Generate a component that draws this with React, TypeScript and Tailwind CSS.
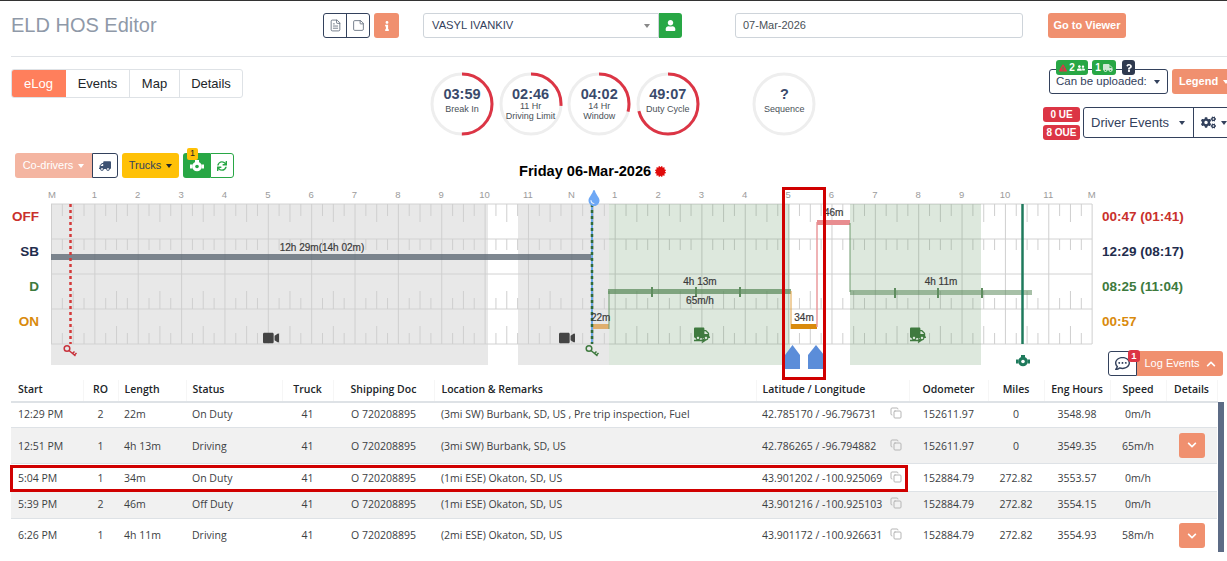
import { Copy, FileText, StickyNote } from 'lucide-react';
import {
    FaCertificate,
    FaChevronDown,
    FaChevronUp,
    FaCogs,
    FaExclamationTriangle,
    FaInfo,
    FaQuestion,
    FaRegCommentDots,
    FaSync,
    FaTint,
    FaTruck,
    FaUser,
    FaUserFriends,
    FaVideo
} from 'react-icons/fa';

const HOUR = 43.36;
const hourLabels = ['M', '1', '2', '3', '4', '5', '6', '7', '8', '9', '10', '11', 'N', '1', '2', '3', '4', '5', '6', '7', '8', '9', '10', '11', 'M'];

const rows = [
    { start: '12:29 PM', ro: 2, length: '22m', status: 'On Duty', loc: '(3mi SW) Burbank, SD, US , Pre trip inspection, Fuel', lat: '42.785170 / -96.796731', odo: '152611.97', miles: '0', eng: '3548.98', speed: '0m/h', open: false, h: 'h-[25px]', alt: false, shift: '' },
    { start: '12:51 PM', ro: 1, length: '4h 13m', status: 'Driving', loc: '(3mi SW) Burbank, SD, US', lat: '42.786265 / -96.794882', odo: '152611.97', miles: '0', eng: '3549.35', speed: '65m/h', open: true, h: 'h-[36px]', alt: true, shift: '[&>td]:pt-[3px]' },
    { start: '5:04 PM', ro: 1, length: '34m', status: 'On Duty', loc: '(1mi ESE) Okaton, SD, US', lat: '43.901202 / -100.925069', odo: '152884.79', miles: '272.82', eng: '3553.57', speed: '0m/h', open: false, h: 'h-[28px]', alt: false, shift: '[&>td]:pt-[3px]' },
    { start: '5:39 PM', ro: 2, length: '46m', status: 'Off Duty', loc: '(1mi ESE) Okaton, SD, US', lat: '43.901216 / -100.925103', odo: '152884.79', miles: '272.82', eng: '3554.15', speed: '0m/h', open: false, h: 'h-[27px]', alt: true, shift: '' },
    { start: '6:26 PM', ro: 1, length: '4h 11m', status: 'Driving', loc: '(2mi ESE) Okaton, SD, US', lat: '43.901172 / -100.926631', odo: '152884.79', miles: '272.82', eng: '3554.93', speed: '58m/h', open: true, h: 'h-[35px]', alt: false, shift: '' }
];

const dials = [
    { time: '03:59', lines: ['Break In'], pct: 50 },
    { time: '02:46', lines: ['11 Hr', 'Driving Limit'], pct: 26 },
    { time: '04:02', lines: ['14 Hr', 'Window'], pct: 29 },
    { time: '49:07', lines: ['Duty Cycle'], pct: 71 }
];

function Dial({ time, lines, pct }: { time: string; lines: string[]; pct: number }) {
    const r = 30;
    const c = 2 * Math.PI * r;
    return (
        <div className="relative h-[64px] w-[64px] shrink-0">
            <svg width="64" height="64" className="absolute inset-0">
                <circle cx="32" cy="32" r={r} fill="none" stroke="#eeeeee" strokeWidth="3" />
                {pct > 0 && (
                    <circle
                        cx="32"
                        cy="32"
                        r={r}
                        fill="none"
                        stroke="#dc3545"
                        strokeWidth="3"
                        strokeDasharray={`${(c * pct) / 100} ${c}`}
                        transform="rotate(-90 32 32)"
                    />
                )}
            </svg>
            <div className="absolute inset-0 flex flex-col items-center pt-[15px] text-center">
                <div className="text-[14.5px] leading-[15px] font-bold text-[#3a4a6b]">{time}</div>
                {lines.map((line) => (
                    <div key={line} className={`whitespace-nowrap text-[9px] text-[#495057] ${lines.length > 1 ? 'leading-[9.5px]' : 'mt-[2px] leading-[11px]'}`}>
                        {line}
                    </div>
                ))}
            </div>
        </div>
    );
}

function Caret({ color = 'border-t-white' }: { color?: string }) {
    return <span className={`inline-block h-0 w-0 shrink-0 border-x-[3.5px] border-t-[4px] border-x-transparent ${color}`} />;
}

// Motor: cuerpo redondo con tapa arriba y salidas a los lados
function Engine({ color, hole }: { color: string; hole: string }) {
    return (
        <svg width="14" height="12" viewBox="0 0 14 12" className="block">
            <rect x="5" y="0" width="4" height="2" fill={color} />
            <circle cx="7" cy="6.5" r="4.8" fill={color} />
            <rect x="0" y="4.5" width="2.5" height="4" fill={color} />
            <rect x="11.5" y="4.5" width="2.5" height="4" fill={color} />
            <circle cx="7" cy="6.5" r="1.8" fill={hole} />
        </svg>
    );
}

function Key({ x, color }: { x: number; color: string }) {
    return (
        <g transform={`translate(${x} 161)`} fill="none" stroke={color} strokeWidth="1.5">
            <circle cx="-3" cy="2.5" r="2.8" />
            <path d="M-1 4.5 L5.5 10 M2.5 7.5 L4.5 5.5 M4.5 9 L6.5 7" />
        </g>
    );
}

function Chart() {
    const gridY = [19, 54, 89, 124, 159];
    const hours = Array.from({ length: 25 }, (_, i) => i);
    const quarters = Array.from({ length: 96 }, (_, i) => i).filter((i) => i % 4 !== 0);

    return (
        <svg width="1041" height="195" className="block shrink-0 overflow-visible" style={{ fontFamily: '"Liberation Sans", Arial, sans-serif' }}>
            {/* bandas grises */}
            <rect x="0" y="19" width="437" height="161" fill="#e8e8e8" />
            <rect x="467" y="19" width="91" height="161" fill="#e8e8e8" />

            {/* rejilla */}
            {gridY.map((y) => (
                <line key={y} x1={0} x2={1041} y1={y} y2={y} stroke="#d2d2d2" strokeWidth="1" />
            ))}
            {hours.map((i) => (
                <line key={i} x1={i * HOUR + 0.5} x2={i * HOUR + 0.5} y1={19} y2={159} stroke="#cfcfcf" strokeWidth="1" />
            ))}
            {quarters.map((i) => {
                const x = (i * HOUR) / 4 + 0.5;
                const long = i % 4 === 2;
                return (
                    <g key={i} stroke="#cfcfcf" strokeWidth="1">
                        <line x1={x} x2={x} y1={19} y2={long ? 37 : 31} />
                        <line x1={x} x2={x} y1={54} y2={65} />
                        <line x1={x} x2={x} y1={long ? 106 : 113} y2={124} />
                        <line x1={x} x2={x} y1={long ? 141 : 148} y2={159} />
                    </g>
                );
            })}

            {/* bandas verdes */}
            <rect x="558" y="19" width="181" height="161" fill="#6b9a6b" opacity="0.23" />
            <rect x="799" y="19" width="131" height="161" fill="#6b9a6b" opacity="0.23" />

            {/* horas */}
            {hourLabels.map((label, i) => (
                <text key={i} x={i * HOUR + (i === 0 ? 1 : 0)} y="12.5" textAnchor="middle" fontSize="9.5" fill="#9b9b9b">
                    {label}
                </text>
            ))}

            {/* traza */}
            <rect x="0" y="69" width="541" height="6" fill="#5f6a75" opacity="0.8" />
            <line x1="541" x2="541" y1="72" y2="140" stroke="#d99a45" strokeWidth="1" opacity="0.7" />
            <rect x="541" y="139" width="17" height="5" fill="#dfae6d" />
            <line x1="558" x2="558" y1="106" y2="144" stroke="#6f9a6f" strokeWidth="1" />
            <rect x="557" y="104" width="183" height="5" fill="#5f8d5f" opacity="0.75" />
            <rect x="600" y="102" width="2" height="10" fill="#5f8d5f" />
            <rect x="644" y="102" width="2" height="10" fill="#5f8d5f" />
            <rect x="688" y="102" width="2" height="10" fill="#5f8d5f" />
            <line x1="740" x2="740" y1="106" y2="144" stroke="#e0a040" strokeWidth="1" />
            <rect x="740" y="139" width="26" height="5" fill="#d98a0c" />
            <line x1="766" x2="766" y1="37" y2="142" stroke="#ea9a9c" strokeWidth="1.5" />
            <rect x="766" y="35" width="33" height="5" fill="#e88d90" />
            <line x1="799" x2="799" y1="38" y2="107" stroke="#6f9a6f" strokeWidth="1" />
            <rect x="799" y="105" width="182" height="5" fill="#5f8d5f" opacity="0.55" />
            <rect x="843" y="103" width="2" height="10" fill="#5f8d5f" />
            <rect x="886" y="103" width="2" height="10" fill="#5f8d5f" />
            <rect x="930" y="103" width="2" height="10" fill="#5f8d5f" />

            {/* marcas verticales */}
            <line x1="19.5" x2="19.5" y1="19" y2="159" stroke="#d33a3a" strokeWidth="2.5" strokeDasharray="3 3" />
            <line x1="541" x2="541" y1="19" y2="159" stroke="#6ea8e8" strokeWidth="2" />
            <line x1="541" x2="541" y1="19" y2="159" stroke="#2f6b3a" strokeWidth="2.5" strokeDasharray="3 3" />
            <line x1="971.5" x2="971.5" y1="19" y2="159" stroke="#1f7a5c" strokeWidth="2.5" />

            {/* textos */}
            <g fontSize="10" fill="#3b3b3b" stroke="#3b3b3b" strokeWidth="0.2">
                <text x="271" y="66" textAnchor="middle">12h 29m(14h 02m)</text>
                <text x="649" y="100" textAnchor="middle">4h 13m</text>
                <text x="649" y="119" textAnchor="middle">65m/h</text>
                <text x="540" y="136">22m</text>
                <text x="753" y="136" textAnchor="middle">34m</text>
                <text x="773" y="31">46m</text>
                <text x="890" y="100" textAnchor="middle">4h 11m</text>
            </g>

            {/* iconos */}
            <FaVideo x={212} y={145} width={13} height={13} color="#444444" />
            <FaVideo x={508} y={145} width={13} height={13} color="#444444" />
            <FaTruck x={643} y={141} width={11} height={12} color="#3f7a3f" />
            <path d="M643 155.5 H654 M651 153.5 L654 155.5 L651 157.5" stroke="#3f7a3f" strokeWidth="1.3" fill="none" />
            <FaTruck x={859} y={141} width={11} height={12} color="#3f7a3f" />
            <path d="M859 155.5 H870 M867 153.5 L870 155.5 L867 157.5" stroke="#3f7a3f" strokeWidth="1.3" fill="none" />
            <FaTint x={535} y={5} width={12} height={13} color="#6ea8f5" />
            <g transform="translate(965 170)">
                <Engine color="#1f7a5c" hole="#ffffff" />
            </g>
            <Key x={19} color="#c8323c" />
            <Key x={541} color="#3f7a3f" />

            {/* flechas */}
            <path d="M734 184 V170 L741.5 160 L749 170 V184 Z" fill="#5b8dd9" />
            <path d="M757 184 V170 L765 160 L773 170 V184 Z" fill="#5b8dd9" />
        </svg>
    );
}

function SideLabel({ text, color, align }: { text: string; color: string; align?: string }) {
    return <div className={`flex h-[35px] items-center text-[13.5px] font-bold whitespace-nowrap ${align ?? ''} ${color}`}>{text}</div>;
}

export default function App() {
    const ink = 'text-[#33415c]';
    return (
        <div className="h-[561px] w-[1227px] overflow-hidden border-t border-[#333333] bg-white font-['Liberation_Sans',Arial,sans-serif] text-[#212529]">
            {/* Encabezado */}
            <div className="ml-[11px] flex h-[56px] items-start border-b border-[#dfe2e6] pt-[12px]">
                <h1 className="w-[312px] text-[20px] leading-[25px] text-[#8f99a8]">ELD HOS Editor</h1>
                <div className="flex h-[25px] w-[47px] overflow-hidden rounded-[3px] border border-[#33415c]">
                    <div className="flex w-[23px] items-center justify-center border-r border-[#33415c]">
                        <FileText size={13} strokeWidth={1.5} className="text-[#5a6575]" />
                    </div>
                    <div className="flex flex-1 items-center justify-center">
                        <StickyNote size={13} strokeWidth={1.5} className="text-[#5a6575]" />
                    </div>
                </div>
                <div className="ml-[4px] flex h-[25px] w-[25px] items-center justify-center rounded-[3px] bg-[#f0906f] text-white">
                    <FaInfo size={10} />
                </div>
                <div className="ml-[24px] flex h-[25px] w-[236px] items-center justify-between rounded-l-[3px] border border-[#ced4da] pl-[8px] pr-[8px] text-[11.2px] text-[#33415c]">
                    <span>VASYL IVANKIV</span>
                    <Caret color="border-t-[#888888]" />
                </div>
                <div className="flex h-[25px] w-[23px] items-center justify-center rounded-r-[3px] bg-[#28a745] text-white">
                    <FaUser size={11} />
                </div>
                <div className="ml-[53px] flex h-[25px] w-[288px] items-center rounded-[3px] border border-[#ced4da] pl-[7px] text-[11px] text-[#495057]">
                    07-Mar-2026
                </div>
                <div className="ml-[25px] flex h-[25px] w-[78px] items-center justify-center rounded-[3px] bg-[#f0906f] text-[11px] font-bold text-white">
                    Go to Viewer
                </div>
            </div>

            {/* Pestañas, relojes y acciones */}
            <div className="flex h-[91px] items-start">
                <div className="ml-[11px] mt-[12px] flex h-[29px] w-[232px] shrink-0 overflow-hidden rounded-[3px] border border-[#dee2e6] text-[13px]">
                    <div className="-my-px -ml-px flex w-[55px] items-center justify-center bg-[#ff7f5c] text-white">eLog</div>
                    <div className="flex w-[64px] items-center justify-center border-r border-[#dee2e6]">Events</div>
                    <div className="flex w-[50px] items-center justify-center border-r border-[#dee2e6]">Map</div>
                    <div className="flex flex-1 items-center justify-center">Details</div>
                </div>
                <div className="ml-[187px] mt-[15px] flex gap-[4.6px]">
                    {dials.map((d) => (
                        <Dial key={d.time} time={d.time} lines={d.lines} pct={d.pct} />
                    ))}
                    <div className="ml-[48px]">
                        <Dial time="?" lines={['Sequence']} pct={0} />
                    </div>
                </div>
                <div className="ml-auto flex w-[184px] shrink-0 flex-col overflow-hidden pt-[3px]">
                    <div className="flex h-[37px] items-end pb-[3px] pl-[6px]">
                        <div className={`relative flex h-[25px] w-[119px] shrink-0 items-center gap-[7px] whitespace-nowrap rounded-[3px] border border-[#33415c] pl-[6px] text-[11.5px] ${ink}`}>
                            Can be uploaded:
                            <Caret color="border-t-[#33415c]" />
                            <div className="absolute -top-[10px] left-[6px] flex gap-[4px]">
                                <div className="flex h-[15px] w-[32px] items-center justify-center gap-[2px] rounded-[3px] bg-[#28a745] text-[10px] font-bold text-white">
                                    <FaExclamationTriangle size={8} className="text-[#dc3545]" />
                                    2
                                    <FaUserFriends size={8} />
                                </div>
                                <div className="flex h-[15px] w-[24px] items-center justify-center gap-[2px] rounded-[3px] bg-[#28a745] text-[10px] font-bold text-white">
                                    1
                                    <FaTruck size={10} className="text-[#cfe8d5]" />
                                </div>
                                <div className="ml-[2px] flex h-[15px] w-[13px] items-center justify-center rounded-[3px] bg-[#2f3a4f] text-white">
                                    <FaQuestion size={8} />
                                </div>
                            </div>
                        </div>
                        <div className="ml-[4px] flex h-[25px] w-[70px] shrink-0 items-center gap-[5px] rounded-[3px] bg-[#f0906f] pl-[7px] text-[11px] font-bold text-white">
                            Legend
                            <Caret />
                        </div>
                    </div>
                    <div className="mt-[10px] flex items-start">
                        <div className="flex w-[37px] shrink-0 flex-col gap-[3px]">
                            <div className="flex h-[15px] items-center justify-center rounded-[3px] bg-[#dc3545] text-[10px] font-bold text-white">0 UE</div>
                            <div className="flex h-[15px] items-center justify-center rounded-[3px] bg-[#dc3545] text-[10px] font-bold text-white">8 OUE</div>
                        </div>
                        <div className={`ml-[3px] flex h-[31px] w-[160px] shrink-0 rounded-[3px] border border-[#33415c] text-[13px] ${ink}`}>
                            <div className="flex w-[110px] items-center gap-[10px] whitespace-nowrap border-r border-[#33415c] pl-[7px]">
                                Driver Events
                                <Caret color="border-t-[#33415c]" />
                            </div>
                            <div className="flex flex-1 items-center gap-[5px] pl-[7px]">
                                <FaCogs size={15} />
                                <Caret color="border-t-[#33415c]" />
                            </div>
                        </div>
                    </div>
                </div>
            </div>

            {/* Conductores y fecha */}
            <div className="flex h-[37px] items-start pl-[15px] pt-[5px]">
                <div className="flex h-[25px] w-[77px] items-center justify-center gap-[5px] rounded-l-[3px] bg-[#f4b5a1] text-[11px] text-white">
                    Co-drivers
                    <Caret />
                </div>
                <div className="flex h-[25px] w-[26px] items-center justify-center rounded-r-[3px] border border-[#33415c] text-[#3d5273]">
                    <FaTruck size={12} className="-scale-x-100" />
                </div>
                <div className="ml-[4px] flex h-[25px] w-[57px] items-center justify-center gap-[5px] rounded-[3px] bg-[#ffc107] text-[11px] text-[#33415c]">
                    Trucks
                    <Caret color="border-t-[#212529]" />
                </div>
                <div className="relative ml-[4px] flex h-[25px] w-[27px] items-center justify-center rounded-l-[3px] bg-[#28a745]">
                    <Engine color="#ffffff" hole="#28a745" />
                    <div className="absolute -top-[5px] left-[4px] flex h-[12px] w-[11px] items-center justify-center rounded-[2px] bg-[#ffc107] text-[9px] text-[#212529]">1</div>
                </div>
                <div className="flex h-[25px] w-[24px] items-center justify-center rounded-r-[3px] border border-[#28a745] text-[#28a745]">
                    <FaSync size={10} />
                </div>
                <div className="ml-[285px] mt-[6px] flex h-[25px] items-center gap-[4px] whitespace-nowrap text-[14.6px] font-bold text-black">
                    Friday 06-Mar-2026
                    <FaCertificate size={11} className="text-[#e00b0b]" />
                </div>
            </div>

            {/* Gráfica */}
            <div className="relative flex h-[195px]">
                <div className="w-[51px] shrink-0 pr-[12px] pt-[15px]">
                    <SideLabel text="OFF" color="text-[#c9302c]" align="justify-end" />
                    <SideLabel text="SB" color="text-[#1f2d4d]" align="justify-end" />
                    <SideLabel text="D" color="text-[#3d7a3d]" align="justify-end" />
                    <SideLabel text="ON" color="text-[#d98a0c]" align="justify-end" />
                </div>
                <Chart />
                <div className="ml-[10px] flex-1 pt-[15px]">
                    <SideLabel text="00:47 (01:41)" color="text-[#c9302c]" />
                    <SideLabel text="12:29 (08:17)" color="text-[#1f2d4d]" />
                    <SideLabel text="08:25 (11:04)" color="text-[#3d7a3d]" />
                    <SideLabel text="00:57" color="text-[#d98a0c]" />
                    <div className="ml-[6px] mt-[11px] flex h-[25px]">
                        <div className="relative flex w-[29px] items-center justify-center rounded-l-[3px] border border-[#33415c] text-[#33415c]">
                            <FaRegCommentDots size={15} />
                            <div className="absolute -right-[4px] -top-[2px] flex h-[12px] w-[12px] items-center justify-center rounded-[3px] bg-[#dc3545] text-[9.5px] font-bold text-white">1</div>
                        </div>
                        <div className="flex w-[86px] items-center justify-center gap-[6px] rounded-r-[3px] bg-[#f0906f] text-[11px] text-white">
                            Log Events
                            <FaChevronUp size={10} />
                        </div>
                    </div>
                </div>
                <div className="absolute left-[782px] top-[2px] h-[193px] w-[44px] border-[3px] border-[#d00000]" />
            </div>

            {/* Tabla */}
            <div className="relative ml-[11px] flex h-[172px] font-['Open_Sans',sans-serif] text-[10.5px] text-[#3c4043]">
                <table className="w-[1206px] table-fixed border-collapse self-start">
                    <colgroup>
                        <col className="w-[72px]" />
                        <col className="w-[35px]" />
                        <col className="w-[68px]" />
                        <col className="w-[96px]" />
                        <col className="w-[51px]" />
                        <col className="w-[101px]" />
                        <col className="w-[322px]" />
                        <col className="w-[153px]" />
                        <col className="w-[79px]" />
                        <col className="w-[56px]" />
                        <col className="w-[66px]" />
                        <col className="w-[56px]" />
                        <col className="w-[51px]" />
                    </colgroup>
                    <thead>
                        <tr className="h-[22px] border-b-2 border-[#dee2e6] text-[#212529] [&>th]:border-r [&>th]:border-[#f6f6f6] [&>th]:pb-[2px] [&>th]:font-semibold">
                            <th className="pl-[7px] text-left">Start</th>
                            <th className="text-center">RO</th>
                            <th className="pl-[6px] text-left">Length</th>
                            <th className="pl-[6px] text-left">Status</th>
                            <th className="text-center">Truck</th>
                            <th className="text-center">Shipping Doc</th>
                            <th className="pl-[7px] text-left">Location &amp; Remarks</th>
                            <th className="pl-[6px] text-left">Latitude / Longitude</th>
                            <th className="text-center">Odometer</th>
                            <th className="text-center">Miles</th>
                            <th className="text-center">Eng Hours</th>
                            <th className="text-center">Speed</th>
                            <th className="text-center">Details</th>
                        </tr>
                    </thead>
                    <tbody>
                        {rows.map((row) => (
                            <tr key={row.start} className={`${row.h} ${row.shift} border-b border-[#dee2e6] last:border-b-0 ${row.alt ? 'bg-[#f1f1f1]' : 'bg-white'}`}>
                                <td className="pl-[7px]">{row.start}</td>
                                <td className="text-center">{row.ro}</td>
                                <td className="pl-[6px]">{row.length}</td>
                                <td className="pl-[6px]">{row.status}</td>
                                <td className="text-center">41</td>
                                <td className="text-center">O 720208895</td>
                                <td className="whitespace-nowrap pl-[7px]">{row.loc}</td>
                                <td className="pl-[6px]">
                                    <div className="flex items-center justify-between pr-[7px]">
                                        <span className="whitespace-nowrap">{row.lat}</span>
                                        <Copy size={12} className="-mt-[3px] text-[#b5b5b5]" />
                                    </div>
                                </td>
                                <td className="text-center">{row.odo}</td>
                                <td className="text-center">{row.miles}</td>
                                <td className="text-center">{row.eng}</td>
                                <td className="text-center">{row.speed}</td>
                                <td className="!pt-0">
                                    {row.open && (
                                        <div className="mx-auto flex h-[25px] w-[26px] items-center justify-center rounded-[3px] bg-[#f0906f] text-white">
                                            <FaChevronDown size={10} />
                                        </div>
                                    )}
                                </td>
                            </tr>
                        ))}
                    </tbody>
                </table>
                <div className="mt-[22px] h-[150px] w-[6px] shrink-0 bg-[#5c6b85]" />
                <div className="absolute -left-[1px] top-[85px] h-[27px] w-[898px] border-[3px] border-[#d00000]" />
            </div>
        </div>
    );
}
